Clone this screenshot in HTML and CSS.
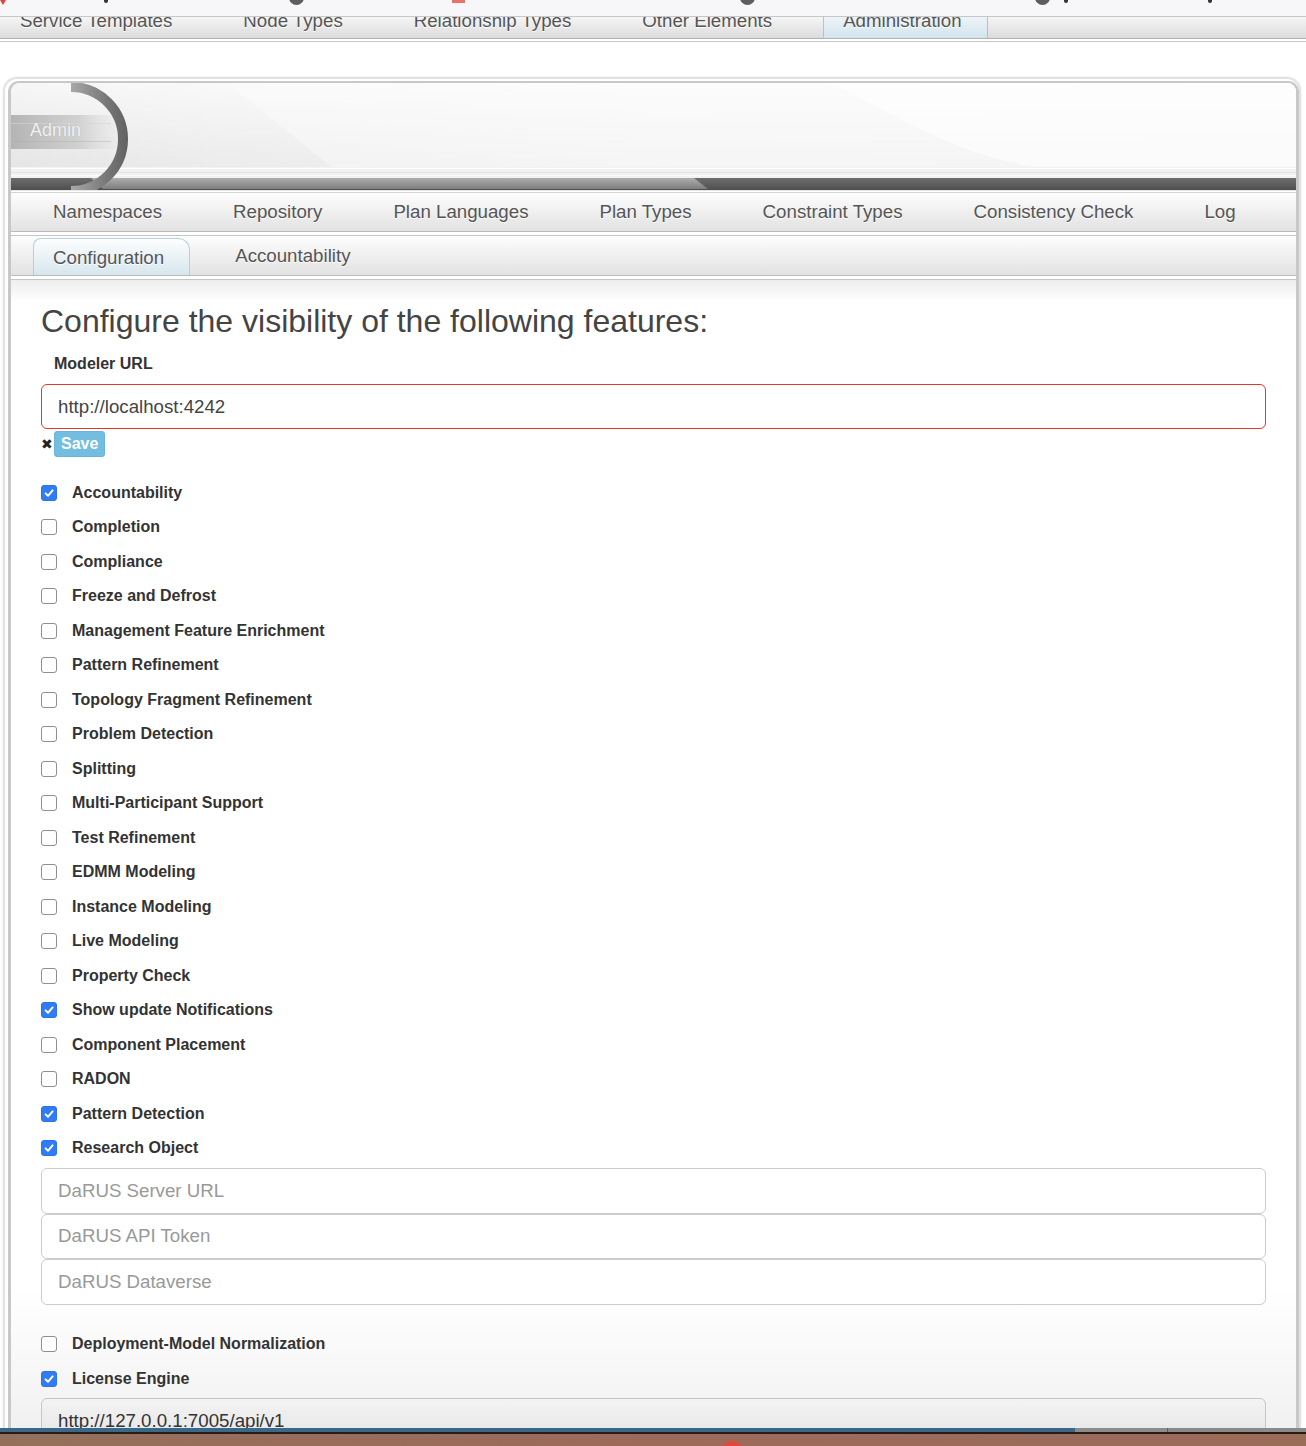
FILE: index.html
```html
<!DOCTYPE html>
<html lang="en">
<head>
<meta charset="utf-8">
<title>Winery Admin - Configuration</title>
<link rel="stylesheet" href="styles.css">
</head>
<body>
<div class="appbar">
  <span class="bit bit-red"></span>
  <span class="bit bit-dark bit-a"></span>
  <span class="circ circ-1"></span>
  <span class="bit bit-red2"></span>
  <span class="circ circ-2"></span>
  <span class="circ circ-3"></span>
  <span class="bit bit-dark bit-b"></span>
  <span class="bit bit-dark bit-c"></span>
</div>
<nav class="topnav">
  <a><span>Service Templates</span></a>
  <a><span>Node Types</span></a>
  <a><span>Relationship Types</span></a>
  <a><span>Other Elements</span></a>
  <a class="active"><span>Administration</span></a>
</nav>
<div class="topnav-rule"></div>

<div class="viewport">
  <div class="panel">
    <div class="panel-inner">
      <div class="banner">
        <svg viewBox="0 0 1285 107" preserveAspectRatio="none" aria-hidden="true">
          <defs>
            <linearGradient id="bg" x1="0" y1="0" x2="1" y2="0">
              <stop offset="0" stop-color="#e3e3e3"/>
              <stop offset="0.16" stop-color="#eaeaea"/>
              <stop offset="0.5" stop-color="#efefef"/>
              <stop offset="1" stop-color="#eeeeee"/>
            </linearGradient>
            <linearGradient id="vshade" x1="0" y1="0" x2="0" y2="1">
              <stop offset="0" stop-color="#ffffff" stop-opacity="0.7"/>
              <stop offset="1" stop-color="#ffffff" stop-opacity="0"/>
            </linearGradient>
            <linearGradient id="band" x1="0" y1="0" x2="1" y2="0">
              <stop offset="0" stop-color="#b4b4b4"/>
              <stop offset="0.6" stop-color="#c9c9c9" stop-opacity="0.8"/>
              <stop offset="1" stop-color="#dcdcdc" stop-opacity="0"/>
            </linearGradient>
            <linearGradient id="arc" gradientUnits="userSpaceOnUse" x1="60" y1="0" x2="120" y2="0">
              <stop offset="0" stop-color="#a8a8a8"/>
              <stop offset="0.6" stop-color="#777777"/>
              <stop offset="1" stop-color="#5e5e5e"/>
            </linearGradient>
            <linearGradient id="strip" x1="0" y1="0" x2="0" y2="1">
              <stop offset="0" stop-color="#6e6e6e"/>
              <stop offset="1" stop-color="#4e4e4e"/>
            </linearGradient>
            <linearGradient id="stripLight" x1="0" y1="0" x2="0" y2="1">
              <stop offset="0" stop-color="#b9b9b9"/>
              <stop offset="1" stop-color="#858585"/>
            </linearGradient>
          </defs>
          <rect x="0" y="0" width="1285" height="95" fill="url(#bg)"/>
          <rect x="0" y="0" width="1285" height="95" fill="url(#vshade)"/>
          <polygon points="216,0 1285,0 1285,85 322,85" fill="#ffffff" opacity="0.35"/>
          <path d="M815 0 C 880 25, 930 70, 1030 85 L 1285 85 L 1285 0 Z" fill="#ffffff" opacity="0.55"/>
          <rect x="0" y="84" width="1285" height="11" fill="#f2f2f2"/>
          <rect x="0" y="85" width="1285" height="1" fill="#ffffff"/>
          <rect x="0" y="89" width="1285" height="1" fill="#e4e4e4"/>
          <rect x="0" y="92" width="1285" height="1" fill="#fbfbfb"/>
          <rect x="0" y="32" width="112" height="34" fill="url(#band)"/>
          <rect x="0" y="40" width="100" height="1" fill="#d6d6d6" opacity="0.6"/>
          <rect x="0" y="58" width="100" height="1" fill="#a9a9a9" opacity="0.4"/>
          <rect x="0" y="95" width="1285" height="12" fill="url(#strip)"/>
          <polygon points="80,95 683,95 697,106 92,106" fill="url(#stripLight)" opacity="0.85"/>
          <path d="M60 4 A50 50 0 1 1 60 108" fill="none" stroke="url(#arc)" stroke-width="10"/>
        </svg>
        <span class="banner-title">Admin</span>
      </div>
      <div class="banner-rule"></div>

      <nav class="subnav">
        <a>Namespaces</a>
        <a>Repository</a>
        <a>Plan Languages</a>
        <a>Plan Types</a>
        <a>Constraint Types</a>
        <a>Consistency Check</a>
        <a>Log</a>
      </nav>
      <div class="subnav-rule"></div>
      <nav class="subnav subnav-2">
        <a class="active">Configuration</a>
        <a>Accountability</a>
      </nav>
      <div class="subnav-rule"></div>

      <main class="content">
        <h1>Configure the visibility of the following features:</h1>
        <label class="field-label" for="modeler">Modeler URL</label>
        <input id="modeler" class="text-input url-input" type="text" value="http://localhost:4242">
        <div class="save-row">
          <span class="close">&#x2716;</span>
          <button class="save-btn" type="button">Save</button>
        </div>

        <ul class="features">
          <li><span class="cb on"><svg viewBox="0 0 12 12"><path d="M2.6 6.4 L5 8.8 L9.6 3.4"/></svg></span>Accountability</li>
          <li><span class="cb"></span>Completion</li>
          <li><span class="cb"></span>Compliance</li>
          <li><span class="cb"></span>Freeze and Defrost</li>
          <li><span class="cb"></span>Management Feature Enrichment</li>
          <li><span class="cb"></span>Pattern Refinement</li>
          <li><span class="cb"></span>Topology Fragment Refinement</li>
          <li><span class="cb"></span>Problem Detection</li>
          <li><span class="cb"></span>Splitting</li>
          <li><span class="cb"></span>Multi-Participant Support</li>
          <li><span class="cb"></span>Test Refinement</li>
          <li><span class="cb"></span>EDMM Modeling</li>
          <li><span class="cb"></span>Instance Modeling</li>
          <li><span class="cb"></span>Live Modeling</li>
          <li><span class="cb"></span>Property Check</li>
          <li><span class="cb on"><svg viewBox="0 0 12 12"><path d="M2.6 6.4 L5 8.8 L9.6 3.4"/></svg></span>Show update Notifications</li>
          <li><span class="cb"></span>Component Placement</li>
          <li><span class="cb"></span>RADON</li>
          <li><span class="cb on"><svg viewBox="0 0 12 12"><path d="M2.6 6.4 L5 8.8 L9.6 3.4"/></svg></span>Pattern Detection</li>
          <li><span class="cb on"><svg viewBox="0 0 12 12"><path d="M2.6 6.4 L5 8.8 L9.6 3.4"/></svg></span>Research Object</li>
        </ul>

        <div class="darus">
          <input class="text-input" type="text" placeholder="DaRUS Server URL">
          <input class="text-input" type="text" placeholder="DaRUS API Token">
          <input class="text-input" type="text" placeholder="DaRUS Dataverse">
        </div>

        <ul class="features features-2">
          <li><span class="cb"></span>Deployment-Model Normalization</li>
          <li><span class="cb on"><svg viewBox="0 0 12 12"><path d="M2.6 6.4 L5 8.8 L9.6 3.4"/></svg></span>License Engine</li>
        </ul>
        <input class="text-input license-input" type="text" value="http://127.0.0.1:7005/api/v1">
      </main>
    </div>
  </div>
</div>

<div class="taskbar">
  <div class="progress"><span class="p-blue"></span><span class="p-grey"></span><span class="p-grey2"></span></div>
  <div class="edge"></div>
  <div class="dock"><span class="dock-dot"></span></div>
</div>
</body>
</html>
```

FILE: styles.css
```css
* { box-sizing: border-box; }

html, body { margin: 0; padding: 0; }

body {
  width: 1306px;
  height: 1446px;
  overflow: hidden;
  background: #ffffff;
  color: #333333;
  font-family: "Liberation Sans", Arial, Helvetica, sans-serif;
}

/* ---------- app bar (cut off at the top) ---------- */
.appbar {
  height: 17px;
  background: #f7f7f9;
  border-bottom: 1px solid #c8c8cb;
  display: flex;
  align-items: flex-start;
  overflow: hidden;
}
.bit { flex: none; display: block; }
.bit-red {
  width: 6px; height: 5px; background: #e0443a;
  clip-path: polygon(0 0, 100% 0, 50% 100%);
}
.bit-dark { width: 4px; height: 3px; background: #333; border-radius: 0 0 2px 2px; }
.bit-a { margin-left: 98px; }
.circ {
  flex: none; display: block;
  width: 15px; height: 15px; border-radius: 50%;
  background: #5d5d62; margin-top: -10px;
}
.circ-1 { margin-left: 181px; }
.bit-red2 { width: 13px; height: 3px; background: #e8716a; margin-left: 148px; }
.circ-2 { margin-left: 275px; }
.circ-3 { margin-left: 280px; }
.bit-b { margin-left: 14px; }
.bit-c { margin-left: 140px; }

/* ---------- top navigation ---------- */
.topnav {
  height: 22px;
  display: flex;
  overflow: hidden;
  background: linear-gradient(#f5f5f5, #dcdcdc);
  border-bottom: 1px solid #b2b2b2;
}
.topnav a {
  flex: none;
  padding: 0 26px 0 20px;
  margin-right: 25px;
  font-size: 18.7px;
  line-height: 21px;
  color: #555555;
  text-shadow: 0 1px 0 #ffffff;
}
.topnav a span { display: block; margin-top: -7px; }
.topnav a.active {
  padding-left: 19px;
  padding-right: 25px;
  background: linear-gradient(#edf4f8, #d3e4ec);
  border-left: 1px solid #a8c7d6;
  border-right: 1px solid #a8c7d6;
}
.topnav-rule {
  height: 3px;
  background: linear-gradient(#ffffff 0 2px, #c8c8c8 2px);
}

/* ---------- page viewport ---------- */
.viewport {
  height: 1386px;
  overflow: hidden;
  padding-top: 35px;
}

.panel {
  margin: 0 5px 0 3px;
  padding: 2px 0 0 3px;
  border: 2px solid #e2e2e2;
  border-bottom: 0;
  border-radius: 14px 14px 0 0;
  box-shadow: 0 0 3px rgba(0, 0, 0, 0.08);
}
.panel-inner {
  border-style: solid;
  border-color: #c8c8c8;
  border-width: 2px 3px 0 3px;
  border-radius: 11px 11px 0 0;
  overflow: hidden;
  background: #ffffff;
}

/* ---------- banner ---------- */
.banner {
  position: relative;
  height: 107px;
}
.banner svg { display: block; width: 100%; height: 107px; }
.banner-title {
  position: absolute;
  left: 19px;
  top: 37px;
  font-size: 18px;
  line-height: 20px;
  color: #f2f2f2;
  text-shadow: 0 0 1px rgba(0, 0, 0, 0.2);
}
.banner-rule {
  height: 3px;
  background: linear-gradient(#e6e6e6 0 1px, #ffffff 1px 2px, #d4d4d4 2px);
}

/* ---------- sub navigation ---------- */
.subnav {
  display: flex;
  height: 39px;
  padding-left: 22px;
  background: linear-gradient(#fdfdfd, #e2e2e2);
  border-bottom: 1px solid #bababa;
}
.subnav a {
  flex: none;
  padding: 0 26px 0 20px;
  margin-right: 25px;
  font-size: 18.7px;
  line-height: 38px;
  color: #555555;
  text-shadow: 0 1px 0 #ffffff;
}
.subnav-rule {
  height: 4px;
  background: linear-gradient(#ffffff 0 3px, #c5c5c5 3px);
}
.subnav-2 { height: 40px; }
.subnav-2 a { line-height: 39px; }
.subnav-2 a.active {
  margin-top: 2px;
  line-height: 37px;
  padding-left: 19px;
  padding-right: 25px;
  border: 1px solid #b5cfdc;
  border-bottom: 0;
  border-radius: 8px 12px 0 0;
  background: linear-gradient(#fdfefe, #d6e6ee);
}

/* ---------- content ---------- */
.content {
  padding: 23px 30px 40px 30px;
  background: linear-gradient(#eeeeee 0, #ffffff 22px, #ffffff 1010px, #f1f1f1 1148px);
}
.content h1 {
  margin: 0;
  font-size: 32px;
  line-height: 36px;
  font-weight: normal;
  color: #444444;
}
.field-label {
  display: block;
  margin: 15px 0 0 13px;
  font-size: 16px;
  line-height: 20px;
  font-weight: bold;
  color: #333333;
}
.text-input {
  display: block;
  width: 100%;
  margin: 0;
  padding: 0 16px;
  height: 45px;
  font-family: "Liberation Sans", Arial, Helvetica, sans-serif;
  font-size: 18.7px;
  color: #444444;
  background: #ffffff;
  border: 1px solid #cccccc;
  border-radius: 6px;
  outline: none;
}
.text-input::placeholder { color: #999999; }
.url-input {
  margin-top: 10px;
  border-color: #e5382c;
}
.save-row {
  display: flex;
  align-items: center;
  height: 26px;
  margin-top: 2px;
}
.close {
  width: 12px;
  margin-right: 1px;
  font-family: "DejaVu Sans", sans-serif;
  font-size: 14px;
  line-height: 14px;
  color: #222222;
}
.save-btn {
  height: 26px;
  padding: 0 6px;
  font-family: "Liberation Sans", Arial, Helvetica, sans-serif;
  font-size: 16px;
  font-weight: bold;
  color: #ffffff;
  background: #72bde0;
  border: 1px solid #69b5d9;
  border-radius: 3px;
}

.features {
  list-style: none;
  margin: 18.25px 0 0 0;
  padding: 0;
}
.features li {
  display: flex;
  align-items: center;
  height: 34.5px;
  font-size: 16px;
  font-weight: bold;
  color: #333333;
}
.cb {
  flex: none;
  display: flex;
  align-items: center;
  justify-content: center;
  width: 16px;
  height: 16px;
  margin-right: 15px;
  border: 1px solid #8e8e93;
  border-radius: 3px;
  background: #ffffff;
}
.cb.on {
  background: #2f7cf6;
  border-color: #2b74e8;
}
.cb svg { width: 12px; height: 12px; }
.cb svg path {
  fill: none;
  stroke: #ffffff;
  stroke-width: 2;
  stroke-linecap: round;
  stroke-linejoin: round;
}

.darus { margin-top: 2.75px; }
.darus .text-input { height: 45.5px; }

.features-2 { margin-top: 22.25px; }

.license-input {
  margin-top: 2.25px;
  color: #333333;
  background: linear-gradient(#f3f3f3, #e5e5e5);
  border-color: #c6c6c6;
}

/* ---------- bottom strip ---------- */
.taskbar { height: 18px; }
.progress { display: flex; height: 4px; }
.p-blue { width: 1075px; background: #3a6889; }
.p-grey { width: 92px; background: #8c8c8c; }
.p-grey2 { flex: 1; background: #8a8a8a; border-left: 1px solid #5e5e5e; }
.edge { height: 2px; background: #2a1b14; }
.dock {
  height: 12px;
  display: flex;
  overflow: hidden;
  background: linear-gradient(90deg, #94705b, #9d6a59 50%, #9a6d59);
}
.dock-dot {
  flex: none;
  width: 22px;
  height: 22px;
  margin: 7px 0 0 721px;
  border-radius: 50%;
  background: #e2483a;
}
```
